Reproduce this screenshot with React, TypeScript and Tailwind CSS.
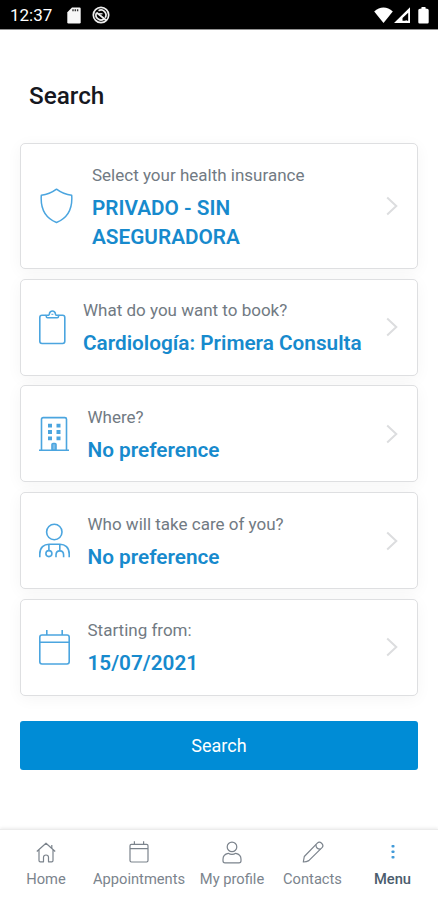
import type { ReactNode } from 'react';

const BuildingIcon = () => (
  <svg width="30" height="36" viewBox="0 0 30 36" fill="none" stroke="#4ba5df" strokeWidth="1.600">
    <path d="M0 34.300h30M2.500 34V3.200Q2.500 1.600 4.200 1.600h21.600q1.700 0 1.700 1.600V34" />
    <path d="M13 34v-5.500q0-1 1-1h2q1 0 1 1V34Z" fill="#7dbde8" />
    <path d="M9 9.700h4M17.500 9.700h4M9 16h4M17.500 16h4M9 22.300h4M17.500 22.300h4" strokeWidth="3.800" />
  </svg>
);

const ShieldIcon = () => (
  <svg width="34" height="36" viewBox="0 0 34 36" fill="none" stroke="#4ba5df" strokeWidth="1.500" strokeLinejoin="round">
    <path d="M16.500 1.200C12 4.600 7 6.700 1.300 7.200C.4 19.500 4.500 29.800 16.500 34.500C28.500 29.800 32.600 19.500 31.700 7.200C26 6.700 21 4.600 16.500 1.200Z" />
  </svg>
);

const ClipboardIcon = () => (
  <svg width="27" height="36" viewBox="0 0 27 36" fill="none" stroke="#4ba5df" strokeWidth="1.600" strokeLinejoin="round">
    <path d="M7 6.300H3Q.8 6.300 .8 8.500v23.800q0 2.200 2.200 2.200h20.600q2.200 0 2.200-2.200V8.500q0-2.200-2.200-2.200h-4" />
    <path d="M7.300 6.300h2.300c.9-.3.700-1.200 1-2.200a2.900 2.900 0 0 1 5.600 0c.3 1 .1 1.900 1 2.200h2.300v1.200q0 1.300-1.300 1.300H8.600Q7.300 8.800 7.300 7.500Z" />
    <path d="M12.400 5.300h2" strokeWidth="1" />
  </svg>
);

const DoctorIcon = () => (
  <svg width="31" height="36" viewBox="0 0 31 36" fill="none" stroke="#4ba5df" strokeWidth="1.600">
    <circle cx="15.300" cy="9" r="7.700" />
    <path d="M.8 34.200V31C.8 24.500 5 21.200 10 21.200h11c5 0 9.200 3.300 9.200 9.800v3.200M9.900 21.500v6M20.800 21.500v6.200" />
    <circle cx="9.900" cy="30.600" r="3" />
    <path d="M17 34.200v-2.100q0-4.200 3.800-4.200t3.800 4.200v2.100" />
  </svg>
);

const CalendarIcon = () => (
  <svg width="31" height="36" viewBox="0 0 31 36" fill="none" stroke="#4ba5df" strokeWidth="1.600">
    <rect x=".8" y="6" width="29.400" height="29" rx="2.200" />
    <path d="M1 13.200h29M7.800 1v5M23.200 1v5" />
  </svg>
);

const AppointmentsIcon = () => (
  <svg width="20" height="22" viewBox="0 0 20 22" fill="none" stroke="#7b838c" strokeWidth="1.200">
    <rect x="1" y="3.300" width="18" height="17.700" rx="1.400" />
    <path d="M1 7.700h18M5.400 .3v3M14.600 .3v3" />
  </svg>
);

const Chevron = () => (
  <svg className="ml-auto shrink-0" width="12" height="20" viewBox="0 0 12 20" fill="none" stroke="#dcdddf" strokeWidth="2">
    <path d="M1.200 1.500 10.300 10 1.200 18.500" />
  </svg>
);

const HomeIcon = () => (
  <svg width="20" height="21" viewBox="0 0 20 21" fill="none" stroke="#7b838c" strokeWidth="1.200" strokeLinejoin="round">
    <path d="M.8 9.500 10 1.200l9.200 8.300M3 8v10.500q0 1.300 1.300 1.300h3.200v-4.500q0-2.300 2.500-2.300t2.500 2.300v4.500h3.200q1.300 0 1.300-1.300V8M15.800 6V3" />
  </svg>
);

const ProfileIcon = () => (
  <svg width="20" height="23" viewBox="0 0 20 23" fill="none" stroke="#7b838c" strokeWidth="1.200">
    <circle cx="10" cy="5.900" r="4.800" />
    <path d="M6.200 12.300C2.500 13 1 15 1 18.200v1.500Q1 21.800 3 21.800h14q2 0 2-2.100v-1.500c0-3.200-1.500-5.200-5.200-5.900q-3.800 2.200-7.600 0Z" />
  </svg>
);

const PencilIcon = () => (
  <svg width="22" height="22" viewBox="0 0 22 22" fill="none" stroke="#7b838c" strokeWidth="1.200" strokeLinejoin="round">
    <path d="M1.300 21l1-5.500L15.300 2.200q2-2 4.300 0 2.400 2.300.4 4.400L6.800 19.600Q4.500 20.800 1.300 21Z" />
    <path d="M14 3.600q-.2 4.600 4.500 4.500" />
  </svg>
);

const DotsIcon = () => (
  <svg width="4" height="16" viewBox="0 0 4 16" fill="#429bd9">
    <rect x=".5" y="1" width="3" height="2.600" rx=".8" />
    <rect x=".5" y="6.500" width="3" height="2.600" rx=".8" />
    <rect x=".5" y="12" width="3" height="2.600" rx=".8" />
  </svg>
);

type RowProps = { icon: ReactNode; label: string; value: string; box: string; text: string };

const Row = ({ icon, label, value, box, text }: RowProps) => (
  <button className={`flex w-full items-center rounded-[5px] border border-[#dedfe1] bg-white pr-[19px] text-left shadow-[0_3px_16px_rgba(0,0,0,0.045)] ${box}`}>
    <span className="shrink-0">{icon}</span>
    <span className={`flex flex-col pt-px ${text}`}>
      <span className="whitespace-nowrap text-[17px] leading-[26px] text-[#717a83]">{label}</span>
      <span className="mt-[6px] text-[20.750px] font-semibold leading-[29px] text-[#178acd]">{value}</span>
    </span>
    <Chevron />
  </button>
);

const NavItem = ({ icon, label, className }: { icon: ReactNode; label: string; className: string }) => (
  <a className={`flex flex-col items-center text-[14.700px] leading-5 whitespace-nowrap ${className}`}>
    <span className="flex h-6 items-center">{icon}</span>
    <span className="mt-[5px]">{label}</span>
  </a>
);

export default function App() {
  return (
    <div className="flex h-[900px] w-[438px] flex-col overflow-hidden bg-white font-['Roboto',sans-serif]">
      <header className="flex h-[30px] shrink-0 items-center border-b border-[#929292] bg-black pl-[10px] pr-[9px] text-white">
        <span className="mt-[1px] w-[57px] text-[17px] leading-5">12:37</span>
        <svg className="mt-[1px]" width="14" height="17" viewBox="0 0 14 17">
          <path d="M5 .5h7.500q1.200 0 1.200 1.200v13.600q0 1.200-1.200 1.200h-11Q.3 16.500.3 15.300V5.300Z" fill="#f7f7f7" />
          <path d="M6 2.300v2M8.300 2.300v2M10.600 2.300v2" stroke="#333" strokeWidth="1.400" />
        </svg>
        <svg className="ml-[11px]" width="18" height="18" viewBox="0 0 18 18" fill="none" stroke="#eee" strokeWidth="1.700">
          <circle cx="9" cy="9" r="7.700" />
          <path d="M4.500 6.800A5 5 0 0 0 11.700 13.200M6.500 4.700A5 5 0 0 1 13.200 11.700M4.500 6.500 14.500 14.500" />
          <path d="M7 7.800h3.500" strokeWidth="1.300" />
        </svg>
        <svg className="ml-auto mt-[1px]" width="19" height="16" viewBox="0 0 19 16" fill="white"><path d="M9.500 16 .2 4.500Q4.500.5 9.500.5t9.300 4Z" /></svg>
        <svg className="mt-[1px] ml-[1px]" width="17" height="17" viewBox="0 0 17 17"><path fill="white" fillRule="evenodd" d="M0 16 16 .3V16ZM8.500 13.800h5.700V5.700L8.500 11Z" /><path d="M11.500 14.300h1.500" stroke="#fff" strokeWidth="1.500" /></svg>
        <svg className="ml-[7px]" width="11" height="18" viewBox="0 0 11 18" fill="white"><path d="M3.500 1h4v1.500q3.200.2 3.200 1.700v12.100q0 1.200-1.200 1.200h-8Q.3 17.500.3 16.300V4.200Q.3 2.700 3.500 2.500Z" /></svg>
      </header>

      <main className="flex-1 px-5">
        <h1 className="ml-[9px] mt-[50px] text-[24.300px] font-medium leading-8 text-[#16181f]">Search</h1>
        <div className="mt-[31px] flex flex-col gap-[9.700px]">
          <Row icon={<ShieldIcon />} label="Select your health insurance" value="PRIVADO - SIN ASEGURADORA" box="h-[126px] pl-[19px]" text="ml-[18px] w-[230px]" />
          <Row icon={<ClipboardIcon />} label="What do you want to book?" value="Cardiología: Primera Consulta" box="h-[97px] pl-[18px]" text="ml-[17px] whitespace-nowrap" />
          <Row icon={<BuildingIcon />} label="Where?" value="No preference" box="h-[97px] pl-[18px]" text="ml-[18.500px]" />
          <Row icon={<DoctorIcon />} label="Who will take care of you?" value="No preference" box="h-[97px] pl-[18px]" text="ml-[17.500px]" />
          <Row icon={<CalendarIcon />} label="Starting from:" value="15/07/2021" box="h-[97px] pl-[18px]" text="ml-[17.500px]" />
        </div>
        <button className="mt-[25px] h-[49px] w-full rounded-[3px] bg-[#008cd6] text-[18px] text-white">Search</button>
      </main>

      <nav className="flex h-[71px] shrink-0 border-t border-[#ececec] pt-[10px] text-[#7b848d] shadow-[0_-1px_3px_rgba(0,0,0,0.08)]">
        <NavItem icon={<HomeIcon />} label="Home" className="w-[92px]" />
        <NavItem icon={<AppointmentsIcon />} label="Appointments" className="w-[94px]" />
        <NavItem icon={<ProfileIcon />} label="My profile" className="w-[92px]" />
        <NavItem icon={<PencilIcon />} label="Contacts" className="w-[69px]" />
        <NavItem icon={<DotsIcon />} label="Menu" className="w-[91px] font-medium text-[#4b5c6d]" />
      </nav>
    </div>
  );
}
